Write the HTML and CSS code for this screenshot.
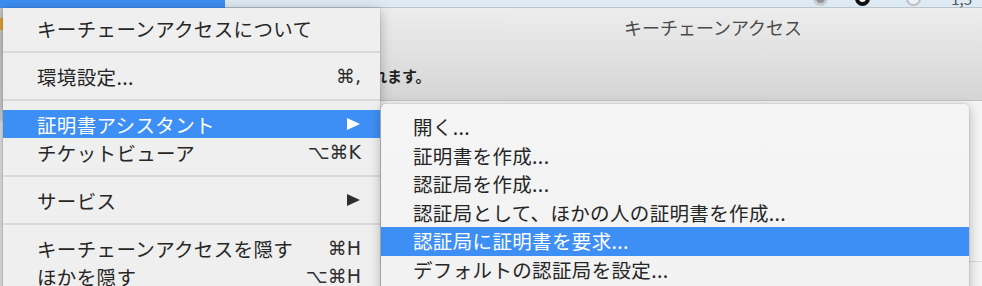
FILE: index.html
```html
<!DOCTYPE html>
<html lang="ja">
<head>
  <meta charset="UTF-8" />
  <title>キーチェーンアクセス</title>
  <link rel="stylesheet" href="styles.css">
</head>
<body>
  <div class="screen">
    <div class="menubar">
      <div class="menubar-app"></div>
      <div class="menubar-rest">
        <span class="status status-gray"></span>
        <span class="status status-dark"></span>
        <span class="status status-light"></span>
        <span class="status-text">1,5</span>
      </div>
    </div>

    <div class="window">
      <div class="edge-strip"><span class="edge-mark"></span></div>
      <div class="window-main">
        <div class="toolbar">
          <div class="title">キーチェーンアクセス</div>
          <div class="notice">れます。</div>
        </div>
        <div class="content">
          <div class="content-row"></div>
        </div>
      </div>
    </div>

    <!-- app menu -->
    <div class="menu main-menu">
      <div class="item"><span class="label">キーチェーンアクセスについて</span></div>
      <div class="separator"></div>
      <div class="item"><span class="label">環境設定...</span><span class="shortcut">⌘,</span></div>
      <div class="separator"></div>
      <div class="item active"><span class="label">証明書アシスタント</span><span class="arrow"></span></div>
      <div class="item"><span class="label">チケットビューア</span><span class="shortcut">⌥⌘K</span></div>
      <div class="separator"></div>
      <div class="item"><span class="label">サービス</span><span class="arrow"></span></div>
      <div class="separator"></div>
      <div class="item"><span class="label">キーチェーンアクセスを隠す</span><span class="shortcut">⌘H</span></div>
      <div class="item"><span class="label">ほかを隠す</span><span class="shortcut">⌥⌘H</span></div>
    </div>

    <!-- certificate assistant submenu -->
    <div class="menu submenu">
      <div class="sub-item">開く...</div>
      <div class="sub-item">証明書を作成...</div>
      <div class="sub-item">認証局を作成...</div>
      <div class="sub-item">認証局として、ほかの人の証明書を作成...</div>
      <div class="sub-item active">認証局に証明書を要求...</div>
      <div class="sub-item">デフォルトの認証局を設定...</div>
    </div>
  </div>
</body>
</html>
```

FILE: styles.css
```css
html, body {
  margin: 0;
  padding: 0;
  background: #f3f3f3;
  font-family: "Noto Sans CJK JP", "DejaVu Sans", sans-serif;
  overflow: hidden;
}

.screen {
  position: relative;
  width: 982px;
  height: 286px;
  overflow: hidden;
}

/* Menu bar (only its lower edge is visible) */
.menubar {
  display: flex;
  height: 8px;
  overflow: hidden;
}
.menubar-app {
  width: 225px;
  background: #3d8df1;
}
.menubar-rest {
  flex: 1;
  display: flex;
  align-items: flex-start;
  justify-content: flex-end;
  padding-right: 10px;
  background: #dde9f3;
  border-bottom: 1px solid #b9c4cc;
}
.status {
  width: 15px;
  height: 15px;
  border-radius: 50%;
  margin-top: -9px;
  margin-left: 28px;
  box-sizing: border-box;
}
.status-gray {
  background: #8f959b;
  border: 3px solid #c7ccd1;
}
.status-dark {
  background: #fff;
  border: 4px solid #111;
  margin-left: 27px;
}
.status-light {
  background: #eef2f5;
  border: 2px solid #b9bfc5;
  margin-left: 36px;
}
.status-text {
  margin-left: 30px;
  margin-top: -12px;
  font-size: 15px;
  color: #555;
}

/* Window behind the menus */
.window {
  display: flex;
  height: 278px;
}
.edge-strip {
  width: 3px;
  background: linear-gradient(#c4c4c4, #cfcfcf 40%, #e4e4e4 41%);
  padding-top: 10px;
}
.edge-mark {
  display: block;
  width: 3px;
  height: 12px;
  background: #e3a43a;
}
.window-main {
  flex: 1;
  display: flex;
  flex-direction: column;
}
.toolbar {
  height: 92px;
  background: linear-gradient(#ededed, #d5d5d5);
  border-bottom: 1px solid #c3c3c3;
}
.title {
  margin-top: 8px;
  padding-left: 441px;
  text-align: center;
  font-size: 18px;
  line-height: 22px;
  color: #4a4a4a;
}
.notice {
  margin-top: 28px;
  padding-left: 369px;
  white-space: nowrap;
  font-size: 15px;
  line-height: 20px;
  font-weight: bold;
  color: #222;
}
.content {
  flex: 1;
  background: #f4f4f4;
  padding-top: 160px;
}
.content-row {
  height: 1px;
  background: #dadada;
}

/* Menus */
.menu {
  position: absolute;
  box-sizing: border-box;
  color: #262626;
  font-size: 19.5px;
  letter-spacing: 0.35px;
  white-space: nowrap;
  box-shadow: 0 3px 12px rgba(0, 0, 0, 0.28), 0 0 0 1px rgba(0, 0, 0, 0.06);
}
.main-menu {
  left: 3px;
  top: 8px;
  width: 377px;
  height: 300px;
  padding-top: 6px;
  background: #efefef;
}
.item {
  display: flex;
  align-items: center;
  height: 28px;
  padding: 0 19px 0 34px;
}
.item .label {
  flex: 1;
}
.shortcut {
  font-family: "DejaVu Sans", sans-serif;
  font-size: 19px;
  letter-spacing: 0;
  color: #2f2f2f;
}
.arrow {
  width: 0;
  height: 0;
  border-left: 13px solid #2f2f2f;
  border-top: 6px solid transparent;
  border-bottom: 6px solid transparent;
  margin-right: 1px;
}
.separator {
  height: 2px;
  margin: 9px 0;
  background: #d9d9d9;
}
.item.active,
.sub-item.active {
  background: #3e8ff5;
  color: #fff;
}
.item.active .arrow {
  border-left-color: #fff;
}

.submenu {
  left: 381px;
  top: 104px;
  width: 588px;
  height: 200px;
  padding-top: 9px;
  border-radius: 5px 5px 0 0;
  background: linear-gradient(#f5f5f5, #f2f2f2);
}
.sub-item {
  height: 28.5px;
  line-height: 28.5px;
  padding-left: 32px;
}
```
